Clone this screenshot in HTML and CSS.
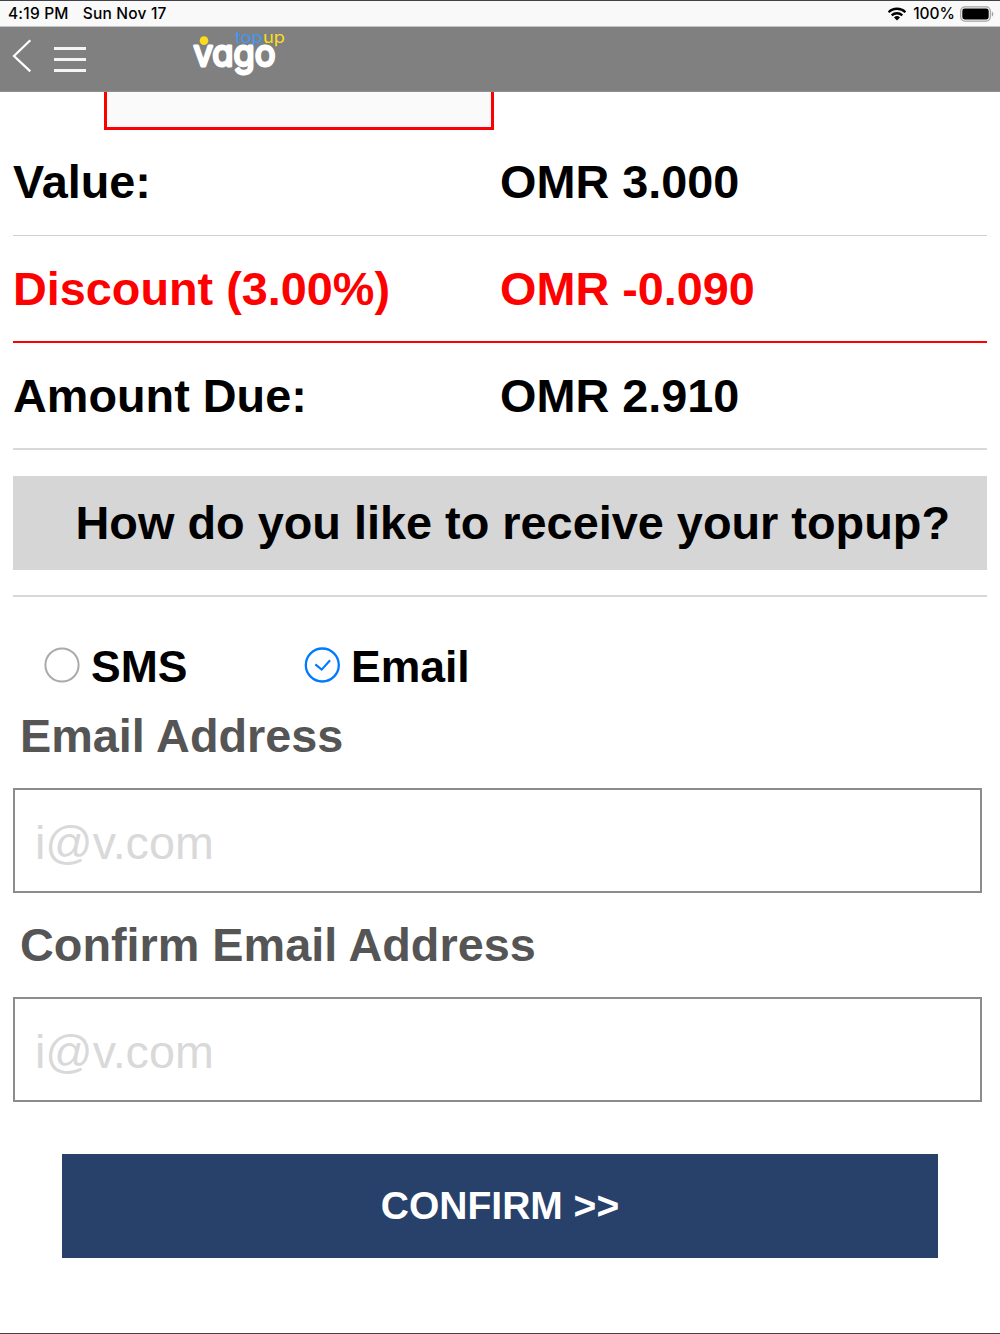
FILE: index.html
```html
<!DOCTYPE html>
<html lang="en">
<head>
    <meta charset="UTF-8">
    <meta name="viewport" content="width=device-width, initial-scale=1.0">
    <title>Vago Topup</title>
    <link rel="stylesheet" href="styles.css">
</head>
<body>
    <div class="status-bar">
        <span class="time">4:19 PM</span>
        <span class="date">Sun Nov 17</span>
        <svg class="wifi" width="20" height="14" viewBox="0 0 20 14">
            <g fill="none" stroke="#000" stroke-width="2.3">
                <path d="M1.6 5.2a12 12 0 0 1 16.8 0"/>
                <path d="M4.7 8.4a7.6 7.6 0 0 1 10.6 0"/>
            </g>
            <path d="M10 13.6l-3-3.1a4.3 4.3 0 0 1 6 0z"/>
        </svg>
        <span class="percent">100%</span>
        <svg class="battery" width="34" height="16" viewBox="0 0 34 16">
            <rect x="0.7" y="0.9" width="29.6" height="14.2" rx="4" fill="none" stroke="#a3a3a3" stroke-width="1.2"/>
            <rect x="2.3" y="2.5" width="26.4" height="11" rx="2.4"/>
            <path d="M31.8 5.4c2 .8 2 4.4 0 5.2z" fill="#a3a3a3"/>
        </svg>
    </div>

    <header class="navbar">
        <svg class="back" width="20" height="34" viewBox="0 0 20 34">
            <path d="M18.3 1.2L2 17l16.3 15.4" fill="none" stroke="#fff" stroke-width="2.2"/>
        </svg>
        <div class="menu"><span></span><span></span><span></span></div>
        <svg class="logo" width="110" height="64" viewBox="0 0 110 64">
            <text class="logo-name" x="8.5" y="38.5" textLength="82" lengthAdjust="spacingAndGlyphs">vago</text>
            <circle cx="19" cy="13.6" r="4.3" fill="#fcdc1c"/>
            <text class="logo-top" x="50" y="16.2" textLength="50" lengthAdjust="spacingAndGlyphs">top<tspan class="logo-up">up</tspan></text>
        </svg>
    </header>

    <main class="container">
        <div class="operator-box"></div>

        <div class="row">
            <span>Value:</span>
            <span>OMR 3.000</span>
        </div>
        <div class="row discount">
            <span>Discount (3.00%)</span>
            <span>OMR -0.090</span>
        </div>
        <div class="row total">
            <span>Amount Due:</span>
            <span>OMR 2.910</span>
        </div>

        <h2 class="question">How do you like to receive your topup?</h2>

        <form class="receive-form">
            <div class="options">
                <div class="option">
                    <svg width="36" height="36" viewBox="0 0 36 36">
                        <circle cx="18" cy="18" r="16.6" fill="none" stroke="#aaa" stroke-width="2"/>
                    </svg>
                    <span>SMS</span>
                </div>
                <div class="option">
                    <svg width="36" height="36" viewBox="0 0 36 36">
                        <circle cx="18.3" cy="18" r="16.5" fill="none" stroke="#007aff" stroke-width="2.3"/>
                        <path d="M11.3 17.4l6.4 5.2 8.4-9.4" fill="none" stroke="#007aff" stroke-width="2.1"/>
                    </svg>
                    <span>Email</span>
                </div>
            </div>

            <label for="email">Email Address</label>
            <input type="text" id="email" placeholder="i@v.com">
            <label for="confirm-email">Confirm Email Address</label>
            <input type="text" id="confirm-email" placeholder="i@v.com">

            <button type="button" class="btn-confirm">CONFIRM &gt;&gt;</button>
        </form>
    </main>
</body>
</html>
```
FILE: styles.css
```css
* {
    box-sizing: border-box;
}

body {
    margin: 0;
    height: 1334px;
    overflow: hidden;
    background-color: #fff;
    border-top: 1px solid #444246;
    border-bottom: 1px solid #444246;
    font-family: "Liberation Sans", Arial, Helvetica, sans-serif;
    font-size: 46.8px;
    font-weight: bold;
    color: #000;
}

.status-bar {
    display: flex;
    align-items: center;
    height: 26px;
    padding: 0 6px 0 8px;
    background-color: #f9f9f9;
    border-bottom: 1px solid #c4c4c4;
    font-family: Inter, sans-serif;
    font-size: 15.5px;
    font-weight: 500;
}

.time,
.date {
    letter-spacing: 0.2px;
}

.date {
    margin-left: 14px;
}

.wifi {
    margin-left: auto;
    margin-right: 6px;
}

.battery {
    margin-left: 5px;
}

.navbar {
    display: flex;
    align-items: flex-start;
    height: 65px;
    background-color: #808080;
    border-bottom: 1px solid #8e8e8e;
}

.back {
    margin: 12px 0 0 12px;
}

.menu {
    display: flex;
    flex-direction: column;
    gap: 8px;
    width: 32px;
    margin: 20px 0 0 22px;
}

.menu span {
    height: 3px;
    background-color: #f4f4f4;
}

.logo {
    margin-left: 99px;
}

.logo-name {
    font-family: Inter, sans-serif;
    font-size: 37px;
    font-weight: 400;
    font-feature-settings: "cv11";
    fill: #fff;
    stroke: #fff;
    stroke-width: 2.8;
    stroke-linejoin: round;
}

.logo-top {
    font-family: Inter, sans-serif;
    font-size: 16.5px;
    font-weight: 400;
    fill: #3d98f5;
}

.logo-up {
    fill: #fcdc1c;
}

.container {
    padding: 0 13px;
}

.operator-box {
    width: 390px;
    height: 38px;
    margin-left: 91px;
    background-color: #fafafa;
    border: 3px solid #f00;
    border-top: none;
}

.row {
    display: grid;
    grid-template-columns: 1fr 1fr;
    align-items: center;
    height: 106px;
    padding-bottom: 1px;
    border-bottom: 1px solid #d0d0d0;
}

.discount {
    height: 107px;
    padding-bottom: 0;
    color: #f00;
    border-bottom: 2px solid #f00;
}

.total {
    height: 107px;
    padding-bottom: 0;
    border-bottom: 2px solid #d8d8d8;
}

.question {
    height: 94px;
    margin: 26px 0 25px;
    padding-left: 62.5px;
    background-color: #d6d6d6;
    font-size: 46.85px;
    line-height: 95px;
    white-space: nowrap;
}

.receive-form {
    border-top: 2px solid #d8d8d8;
}

.options {
    display: flex;
    height: 103px;
    padding: 35px 0 0 31px;
    font-size: 44.5px;
}

.option {
    display: flex;
    align-items: center;
    gap: 11px;
    width: 260px;
    height: 66px;
}

.option span {
    padding-top: 3px;
}

label {
    display: block;
    height: 88px;
    padding-left: 7px;
    color: #555;
    line-height: 72px;
}

input {
    display: block;
    width: 969px;
    height: 105px;
    margin-bottom: 16px;
    padding: 5px 20px 0;
    border: 2px solid #8c8c8c;
    font-family: inherit;
    font-size: 46.7px;
}

input::placeholder {
    color: #d9d9d9;
    opacity: 1;
}

.btn-confirm {
    display: block;
    width: 876px;
    height: 104px;
    margin: 52px 0 0 49px;
    padding: 0 0 1px;
    border: none;
    background-color: #28416a;
    color: #fff;
    font-family: inherit;
    font-size: 39px;
    font-weight: bold;
}
```
